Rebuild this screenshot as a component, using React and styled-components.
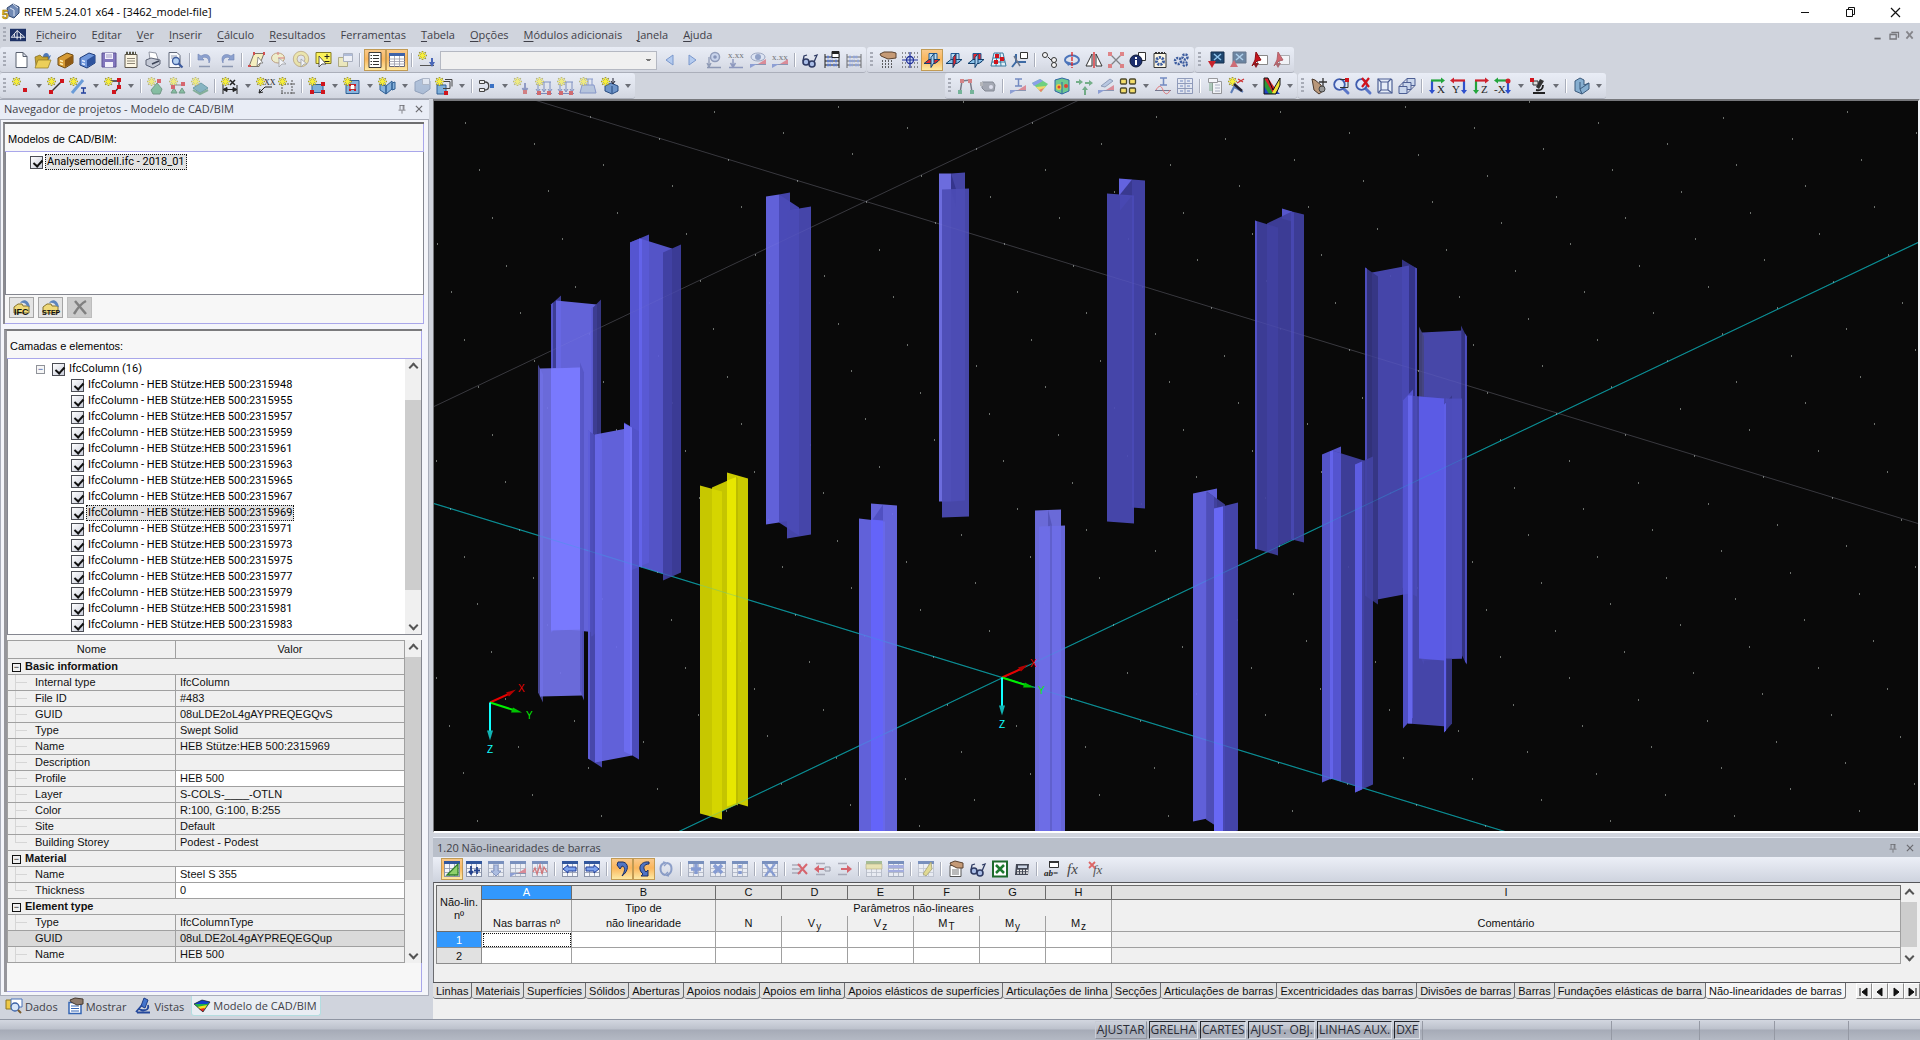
import React, { useState } from "react";
import styled, { createGlobalStyle, css } from "styled-components";

/* ---------- icons (all on an 18 x 18 grid) ---------- */

const Star = () => (
	<g>
		<path d="M4.5 0v9M0 4.5h9M1.3 1.3l6.4 6.4M7.7 1.3L1.3 7.7" stroke="#8f8a2a" strokeWidth="1.6" />
		<path d="M4.5 .8v7.4M.8 4.5h7.4M2 2l5 5M7 2L2 7" stroke="#f6ee3c" strokeWidth="1.2" />
	</g>
);

const Dot = ({ x, y, c = "#d0141c" }) => <rect x={x - 2} y={y - 2} width="4" height="4" fill={c} />;

const Magnifier = () => (
	<g>
		<path d="M11 11l5 5" stroke="#5a76c8" strokeWidth="3" strokeLinecap="round" />
		<circle cx="7.5" cy="7.5" r="5.3" fill="#dfe8fa" stroke="#3f5cae" strokeWidth="1.8" />
	</g>
);

const Cells = ({ c = "#8a93a8" }) => (
	<g>
		<rect x="1.5" y="1.5" width="15" height="15" fill="#f4f6fb" stroke={c} />
		<path d="M1 8.5h16M1 12.5h16M6.5 2v15M11.5 2v15" stroke={c} strokeWidth=".8" />
		<path d="M1 1h16v3H1z" fill="#31569c" />
	</g>
);

const Planes = ({ red }) => (
	<g>
		<path d="M6 2.5h8v9H6z" fill={red === 2 ? "#e3262c" : "#b9dcf5"} stroke="#1f5b96" />
		<path d="M1 12.5l5-4h11l-5 4z" fill={red === 0 ? "#e3262c" : "#8cc3ea"} stroke="#123f6c" />
		<path d="M8 6.5l3-4v9l-3 5z" fill={red === 1 ? "#e3262c" : "#a6d0f0"} stroke="#123f6c" />
	</g>
);

const Abacus = () => (
	<g>
		<path d="M2 3v14M16 3v14M2 6h14M2 10h14M2 14h14" stroke="#222" strokeWidth="1" />
		<path d="M4 6h2M8 6h5M4 10h6M12 10h2M4 14h4M10 14h4" stroke="#5f7cc8" strokeWidth="2.5" strokeDasharray="2 .5" />
	</g>
);

const Arrow2 = ({ a, b, t }) => (
	<g>
		<path d="M4 4v10" stroke={a} strokeWidth="2.2" />
		<path d="M1 13h6l-3 4z" fill={a} />
		<path d="M3 3.5h10" stroke={b} strokeWidth="2.2" />
		<path d="M13 .5v6l4-3z" fill={b} />
		<text x="9" y="16" fontFamily="Liberation Serif" fontSize="11" fill="#222">{t}</text>
	</g>
);

const Ramp = () => (
	<g>
		<path d="M1 13.5h16" stroke="#56648e" />
		<path d="M1 13v4l7-4z" fill="#5b76c8" />
		<path d="M9 13l8-5v5z" fill="#d95563" />
	</g>
);

const ICONS = {
	fresh: <path d="M4 1.5h7l4 4v11H4zM11 1.5v4h4" fill="#fff" stroke="#59606f" />,
	open: (
		<g>
			<path d="M9 6c0-5 6-5 6-1l2-1-2 5-4-3 2 0" fill="#4d78b8" />
			<path d="M1 6l5-2 2 2h6v9H2z" fill="#c7a632" stroke="#7d661c" strokeWidth=".7" />
			<path d="M4 9h13l-3 8H1z" fill="#eccf59" stroke="#8d7624" strokeWidth=".7" />
		</g>
	),
	boxY: (
		<g>
			<path d="M2 7l9-5 6 2v8l-8 5-7-3z" fill="#d69a34" stroke="#6b4a14" />
			<path d="M9 9v7l8-4V4z" fill="#8f5a14" />
			<path d="M4 9.5l3 1M4 12.5l3 1" stroke="#fff2b8" strokeWidth="1.5" />
		</g>
	),
	boxB: (
		<g>
			<path d="M2 7l9-5 6 2v8l-8 5-7-3z" fill="#6f97dc" stroke="#1e3c7a" />
			<path d="M9 9v7l8-4V4z" fill="#2f549e" />
			<path d="M4 9.5l3 1M4 12.5l3 1" stroke="#e2ecff" strokeWidth="1.5" />
		</g>
	),
	save: (
		<g>
			<path d="M2 2h14v14H2z" fill="#8277bd" stroke="#5c5294" />
			<path d="M5 2h8v6H5zM5 11h8v5H5z" fill="#f2f0fb" />
			<path d="M6 4h6M6 6h6" stroke="#9f9ac4" />
		</g>
	),
	report: (
		<g>
			<path d="M3 3.5h12v13H3z" fill="#fbf5e3" stroke="#5d564a" />
			<path d="M4 2h10" stroke="#554" strokeWidth="2.5" strokeDasharray="2 1" />
			<path d="M5 7.5h8M5 10h8M5 12.5h8" stroke="#8b8475" />
		</g>
	),
	print: (
		<g>
			<path d="M5 1l7 1 2 6-8 1z" fill="#fff" stroke="#7c8190" strokeWidth=".8" />
			<path d="M2 9l5-2 9 2v4l-7 4-7-3z" fill="#c4c9d6" stroke="#5c6375" />
			<path d="M8 13l7-3" stroke="#3d4457" strokeWidth="1.5" />
		</g>
	),
	preview: (
		<g>
			<path d="M3 1.5h8l3 3v12H3z" fill="#f7f9fd" stroke="#5f6778" />
			<path d="M5 5h6M5 7h4" stroke="#8f98ac" />
			<circle cx="10" cy="10" r="3.5" fill="#b4d1f3" stroke="#3d5b9e" strokeWidth="1.3" />
			<path d="M12.5 12.5l4 4" stroke="#3d5b9e" strokeWidth="2.2" />
		</g>
	),
	undo: (
		<g>
			<path d="M2 3v6h6L6 7c4-2 7 0 7 5 3-6-1-11-8-7z" fill="#8ca1cf" stroke="#6f83b3" strokeWidth=".6" />
			<path d="M3 15.5h11" stroke="#8d98b2" strokeWidth="1.5" />
		</g>
	),
	redo: (
		<g>
			<path d="M16 3v6h-6l2-2c-4-2-7 0-7 5-3-6 1-11 8-7z" fill="#8ca1cf" stroke="#6f83b3" strokeWidth=".6" />
			<path d="M4 15.5h11" stroke="#8d98b2" strokeWidth="1.5" />
		</g>
	),
	selPoly: (
		<g>
			<path d="M6 2.5h10l-5 13H1z" fill="#f5efc0" stroke="#7c7466" />
			<path d="M5 1h2v3H5zM15 1h2v3h-2zM0 14h3v2H0z" fill="#d05050" />
			<path d="M10 6l-1 9 3-3 3 0z" fill="#fff" stroke="#777" strokeWidth=".8" />
		</g>
	),
	selEll: (
		<g>
			<ellipse cx="8" cy="7" rx="6.5" ry="5" fill="#f7f2b4" stroke="#a8753c" />
			<path d="M8 7h6M8 1v3" stroke="#d33" />
			<path d="M9 7l0 9 3-3 4 0z" fill="#fff" stroke="#777" strokeWidth=".8" />
		</g>
	),
	selRing: (
		<g>
			<circle cx="9" cy="8" r="6" fill="none" stroke="#f0e482" strokeWidth="3.5" />
			<circle cx="9" cy="8" r="7.7" fill="none" stroke="#a07c3c" strokeWidth=".8" />
			<circle cx="9" cy="8" r="4" fill="none" stroke="#a07c3c" strokeWidth=".8" />
			<path d="M9 8l0 8 3-3 3 0z" fill="#fff" stroke="#777" strokeWidth=".8" />
		</g>
	),
	selAdd: (
		<g>
			<path d="M2 1.5h15v11H2z" fill="#fbf25a" stroke="#857b20" />
			<path d="M13 3v5M10.5 5.5h5M10.500 10.5h5" stroke="#222" />
			<path d="M5 5l0 11 3-3 4 0z" fill="#fff" stroke="#333" strokeWidth=".8" />
		</g>
	),
	winCopy: (
		<g>
			<path d="M2.5 6.5h9v9h-9z" fill="#f6eda0" stroke="#8f8747" />
			<path d="M7.5 2.5h9v8h-9z" fill="#f7f8fb" stroke="#8790a4" />
			<path d="M8 3h8v2H8z" fill="#8da0c8" />
		</g>
	),
	list: (
		<g>
			<path d="M3 1.5h12v15H3z" fill="#fff" stroke="#3a3a3a" />
			<path d="M7 4.5h6M7 7.5h6M7 10.5h6M7 13.5h6" stroke="#333" />
			<path d="M4.5 4.5h1.5M4.5 7.5h1.5M4.5 10.5h1.5M4.5 13.5h1.5" stroke="#333" />
		</g>
	),
	sheet: (
		<g>
			<path d="M1.5 2.5h15v13h-15z" fill="#fff" stroke="#667" />
			<path d="M1 2h16v3H1z" fill="#3f62a8" />
			<path d="M1 8h16M1 10.5h16M1 13h16M6.5 5v11M11.5 5v11" stroke="#99a" strokeWidth=".8" />
		</g>
	),
	starAxis: (
		<g>
			<Star />
			<path d="M2 14.5h14" stroke="#555" />
			<path d="M13 7v4h-2l3 5 3-5h-2V7z" fill="#4a67b8" />
		</g>
	),
	prev: <path d="M12 4v10L5 9z" fill="#b4cbef" stroke="#7b98cc" />,
	next: <path d="M6 4v10l7-5z" fill="#b4cbef" stroke="#7b98cc" />,
	eyeDown: (
		<g>
			<circle cx="10" cy="6" r="4.5" fill="#b8c8ea" stroke="#5a6c98" strokeWidth="1.5" />
			<circle cx="10" cy="6" r="1.8" fill="#4a5f96" />
			<path d="M4 6v8M2 12l2 4 2-4M2 16.5h14" stroke="#5d6d94" fill="none" strokeWidth="1.3" />
		</g>
	),
	xxDown: (
		<g>
			<text x="1" y="7" fontFamily="Liberation Serif" fontSize="9" fill="#222">x.xx</text>
			<path d="M6 8v7M3.5 12l2.5 4 2.5-4M2 16.5h14" stroke="#5d6da4" fill="none" strokeWidth="1.5" />
		</g>
	),
	eyeRamp: (
		<g>
			<ellipse cx="9" cy="6" rx="7" ry="4" fill="#dbe4f6" stroke="#6d7da4" />
			<circle cx="9" cy="6" r="3" fill="#5d75ad" />
			<Ramp />
		</g>
	),
	xxRamp: (
		<g>
			<text x="1" y="9" fontFamily="Liberation Serif" fontSize="9" fill="#222">x.xx</text>
			<Ramp />
		</g>
	),
	glasses: (
		<g>
			<circle cx="5" cy="11" r="3" fill="#a9bde6" stroke="#2e3a63" strokeWidth="1.6" />
			<circle cx="11" cy="13" r="3" fill="#a9bde6" stroke="#2e3a63" strokeWidth="1.6" />
			<path d="M2 10l1-5 3-1M13 11l3-7-3 1" fill="none" stroke="#2e3a63" strokeWidth="1.3" />
		</g>
	),
	abacus: (
		<g>
			<Abacus />
			<path d="M9 .5h7v6H9z" fill="#fff" stroke="#222" />
			<path d="M9 1h7v2H9z" fill="#222" />
		</g>
	),
	abacus2: <Abacus />,
	handGrid: (
		<g>
			<path d="M3 10h12M3 13h12M3 16h12" stroke="#333" strokeDasharray="1 2" strokeWidth="1.5" />
			<path d="M1 3l4-2h8l4 1v5l-8 1-7-3z" fill="#c59a76" stroke="#5b4331" />
		</g>
	),
	snapGrid: (
		<g>
			<path d="M1 2h16M1 6h16M1 12h16M1 16h16" stroke="#333" strokeDasharray="1 2" strokeWidth="1.2" />
			<circle cx="9" cy="9" r="3.5" fill="#cdd9f5" stroke="#22329a" strokeWidth="1.3" />
			<path d="M9 1v16M1 9h16" stroke="#22329a" strokeWidth="1.2" />
		</g>
	),
	plane0: <Planes red={0} />,
	plane1: <Planes red={1} />,
	plane2: <Planes red={2} />,
	planeGrid: (
		<g>
			<path d="M5 2h9l3 13H2z" fill="#dff0fa" stroke="#3a7a9e" />
			<path d="M4 7h11M3 11h13M8 2L7 15M11 2l1 13" stroke="#3a7a9e" />
			<Dot x={8} y={5} /><Dot x={13} y={8} /><Dot x={7} y={11} />
		</g>
	),
	planeTool: (
		<g>
			<path d="M5 3v8h10M5 11l-4 5" stroke="#3d6aa4" strokeWidth="2" fill="none" />
			<path d="M9.5 1.5h7v6h-7z" fill="#fff" stroke="#333" />
			<path d="M3 5l6 10" stroke="#6d7688" strokeWidth="1.5" />
		</g>
	),
	copyNode: (
		<g fill="#f5f5f7" stroke="#333">
			<circle cx="4" cy="4" r="2.5" />
			<path d="M7 6l5 5" />
			<circle cx="13" cy="9" r="2.5" />
			<circle cx="13" cy="14" r="2.5" />
		</g>
	),
	rotate: (
		<g>
			<ellipse cx="9" cy="9" rx="7" ry="4.5" fill="none" stroke="#4b74ba" strokeWidth="2" />
			<path d="M3 10l2 5 4-3z" fill="#4b74ba" />
			<path d="M9 1v16" stroke="#d22" strokeWidth="1.3" strokeDasharray="4 1" />
		</g>
	),
	mirror: (
		<g>
			<path d="M7 3v12H1zM11 3v12h6z" fill="#fff" stroke="#333" />
			<path d="M9 1v16" stroke="#d22" strokeWidth="1.3" />
		</g>
	),
	cross: (
		<g>
			<path d="M3 3l12 12M15 3L3 15" stroke="#444" strokeWidth="1.3" />
			<Dot x={3} y={3} c="#d44" /><Dot x={15} y={3} c="#d44" /><Dot x={3} y={15} c="#d44" /><Dot x={15} y={15} c="#d44" />
		</g>
	),
	info: (
		<g>
			<path d="M9.5 1.5h7v8h-7z" fill="#fff" stroke="#333" />
			<circle cx="7" cy="10" r="6" fill="#1d2f6e" stroke="#0d1838" />
			<path d="M7 9v5M7 6v2" stroke="#fff" strokeWidth="2" />
		</g>
	),
	gearPage: (
		<g>
			<path d="M3 2.5h12v14H3z" fill="#fbf6e4" stroke="#333" />
			<circle cx="9" cy="10" r="3.5" fill="none" stroke="#3b5b9e" strokeWidth="3" strokeDasharray="2 1" />
			<path d="M4 2h10" stroke="#333" strokeWidth="2" strokeDasharray="2 1" />
		</g>
	),
	gears: (
		<g fill="none" stroke="#3b5b9e">
			<circle cx="5" cy="10" r="3" strokeWidth="2.5" strokeDasharray="2 1" />
			<circle cx="12" cy="6" r="2.5" strokeWidth="2.5" strokeDasharray="2 1" />
			<circle cx="12" cy="13" r="2" strokeWidth="2" strokeDasharray="2 1" />
		</g>
	),
	csDown: (
		<g>
			<path d="M4 1h13v11H4z" fill="#1f4770" stroke="#17314e" />
			<path d="M7 3l7 6M14 3L7 9" stroke="#8fc3ea" strokeWidth="1.5" />
			<path d="M1 10h8l-4 7z" fill="#c7222b" />
		</g>
	),
	csUp: (
		<g>
			<path d="M4 1h13v11H4z" fill="#1f4770" stroke="#17314e" />
			<path d="M7 3l7 6M14 3L7 9" stroke="#8fc3ea" strokeWidth="1.5" />
			<path d="M1 16h8l-4-7z" fill="#c7222b" />
		</g>
	),
	pdf: (
		<g>
			<path d="M6.5 4.5h10v9h-10z" fill="#fff" stroke="#888" />
			<path d="M5 1l5 8-4 1-5 5 3-6z" fill="#c7141e" stroke="#8b0c12" />
			<path d="M2 12h6l-3 5z" fill="#8b1a20" />
		</g>
	),

	node: (<g><Star /><Dot x={13} y={13} /></g>),
	line: (<g><path d="M4 15L15 4" stroke="#333" strokeWidth="1.5" /><Star /><Dot x={4} y={15} /><Dot x={15} y={4} /></g>),
	member: (
		<g>
			<path d="M3 16L14 3" stroke="#6a9cd8" strokeWidth="3" />
			<Star />
			<path d="M12 11h5M14.5 11v5M12 16h5" stroke="#22409c" strokeWidth="1.3" />
		</g>
	),
	polyline: (
		<g>
			<path d="M5 4h10v6l-5 6" stroke="#333" fill="none" strokeWidth="1.3" />
			<Star />
			<Dot x={15} y={3} /><Dot x={15} y={10} /><Dot x={10} y={15} />
		</g>
	),
	support: (
		<g>
			<path d="M10 6l5 6-2 5H6l-2-4z" fill="#4fa974" stroke="#2f6c48" />
			<Star /><Dot x={12} y={4} />
		</g>
	),
	support2: (
		<g>
			<path d="M2 8h14" stroke="#555" />
			<path d="M5 11l3 5H2zM13 11l3 5h-6z" fill="#4fa974" stroke="#2f6c48" />
			<Star /><Dot x={14} y={7} /><Dot x={4} y={10} />
		</g>
	),
	supportSurf: (
		<g>
			<path d="M2 11l8-5 7 5-8 5z" fill="#4e97a8" stroke="#256f7c" />
			<path d="M2 13l7 4 8-4" fill="none" stroke="#4d9168" strokeWidth="2" />
			<Star />
		</g>
	),
	dim: (
		<g>
			<path d="M2 8v9M16 8v9M2 12.5h14M2 12.5l4-2v4zM16 12.5l-4-2v4z" stroke="#222" fill="#222" />
			<Star />
			<path d="M9 3l5 5M14 3L9 8" stroke="#222" strokeWidth="1.5" />
		</g>
	),
	comment: (
		<g>
			<Star />
			<text x="8" y="8" fontFamily="Liberation Serif" fontSize="8" fill="#222">XX</text>
			<path d="M16 10H9l-6 6M3 16l1-4M3 16l4-1" stroke="#222" fill="none" />
		</g>
	),
	guide: (
		<g>
			<path d="M4 4v13M14 3v14M3 7h14M3 16h14" stroke="#555" strokeDasharray="2 1" />
			<Star />
		</g>
	),
	surf: (
		<g>
			<path d="M4 7.5h11v8H4z" fill="#7fb0da" stroke="#2e5f94" />
			<Star />
			<Dot x={15} y={7} /><Dot x={4} y={15} /><Dot x={15} y={15} />
		</g>
	),
	opening: (
		<g>
			<path d="M3 3.5h13v13H3z" fill="#89b4dc" stroke="#2e5f94" />
			<path d="M7 7.5h5v5H7z" fill="#fff" stroke="#a33" />
			<Star />
			<rect x="6" y="7" width="2" height="2" fill="#d0141c" /><rect x="11" y="7" width="2" height="2" fill="#d0141c" /><rect x="6" y="12" width="2" height="2" fill="#d0141c" /><rect x="11" y="12" width="2" height="2" fill="#d0141c" />
		</g>
	),
	fold: (
		<g>
			<path d="M2 7l6 2v8l-6-4zM8 9l6-5v8l-6 5zM14 6l3-1v7l-3 1z" fill="#86b2dc" stroke="#2e5f94" />
			<Star />
		</g>
	),
	solid: (
		<g>
			<path d="M2 5l7-3 8 2v8l-7 5-8-3z" fill="#8fa9cc" stroke="#61799e" />
			<path d="M9.5 1.5h7v6h-7z" fill="#dfe6f2" stroke="#8b97ad" />
		</g>
	),
	solidNew: (
		<g>
			<path d="M2 8h9v9H2z" fill="#7fb0da" stroke="#2e5f94" />
			<path d="M8 4.5h7v7H8M10 2.5h7v7" fill="none" stroke="#444" />
			<Star /><Dot x={11} y={16} />
		</g>
	),
	joint: (
		<g>
			<path d="M1.5 3.5h5v3h-5zM1.5 11.5h5v3h-5z" fill="#eee" stroke="#444" />
			<path d="M7 5c5 0 5 8 0 8" fill="none" stroke="#444" strokeWidth="1.3" />
			<Dot x={14} y={9} c="#3b72c4" />
		</g>
	),
	load: (<g><Star /><path d="M12 6v7M9.5 11l2.500 4 2.500-4" stroke="#5160a4" fill="none" strokeWidth="1.8" /><Dot x={12} y={15} c="#c44" /></g>),
	loadLine: (
		<g>
			<path d="M2 5h14M3 5v9M9 5v9M15 5v9M1 12l2 3 2-3M7 12l2 3 2-3M13 12l2 3 2-3M1 16.5h16" stroke="#3f58a4" fill="none" />
			<Star />
			<Dot x={4} y={16} c="#c22" /><Dot x={14} y={16} c="#c22" />
		</g>
	),
	loadSurf: (
		<g>
			<path d="M3 8h12l2 8H1z" fill="#9fb4d6" stroke="#4f68b4" />
			<path d="M5 2v6M9 2v6M13 2v6M5 2h9" stroke="#4f68b4" />
			<Star />
		</g>
	),
	loadSolid: (
		<g>
			<path d="M4 9l6-3 7 3v5l-6 3-7-3z" fill="#6f95c9" stroke="#274b80" />
			<path d="M11 9v7" stroke="#274b80" />
			<Star />
			<path d="M12 1v5M10 4l2 3 2-3" stroke="#223" fill="none" />
		</g>
	),
	frame: (
		<g>
			<path d="M3 16L5 4l8-1 2 12" stroke="#334" fill="none" strokeWidth="1.5" />
			<Dot x={5} y={4} c="#c44" /><Dot x={13} y={4} c="#c44" /><Dot x={3} y={15} c="#396" /><Dot x={15} y={15} c="#396" />
		</g>
	),
	camera: (<g><path d="M3 5h11l2 3-1 6H6L3 11z" fill="#7d828e" stroke="#4d525e" /><circle cx="12" cy="10" r="2" fill="#dde" /><path d="M1 5h3v4H1z" fill="#999" /></g>),
	beamRamp: (<g><path d="M6 2h7M9.5 2v7M6 9h7" stroke="#2b4fa4" strokeWidth="1.5" /><Ramp /></g>),
	surfRes: (
		<g>
			<path d="M1 6l8-4 8 5-7 8z" fill="#6fd080" />
			<path d="M1 6l8-4 3 2-9 5z" fill="#8aa0e8" />
			<path d="M5 10l10-1-5 6z" fill="#f0d868" />
			<path d="M8 13l5-2-3 4z" fill="#e87c70" />
		</g>
	),
	solidRes: (
		<g>
			<path d="M2 3l7-2 7 2v11l-7 3-7-3z" fill="#6fc890" stroke="#2f66a4" />
			<circle cx="6" cy="10" r="3" fill="#e8cc46" /><circle cx="6" cy="10" r="1.5" fill="#dd4433" />
			<path d="M9 5v12" stroke="#2f66a4" /><circle cx="13" cy="9" r="2" fill="#dd4433" />
		</g>
	),
	reaction: (<g fill="#2d8a46"><path d="M9 18v-5H7l3-4 3 4h-2v5zM10 5h4V3l4 3-4 3V7h-4zM1 4h3V2l4 3-4 3V6H1z" /></g>),
	section: (<g><path d="M4 9l9-7 3 2-8 6z" fill="#9db4d8" stroke="#5a6f96" /><Ramp /></g>),
	panels: (
		<g fill="#f3dd6a" stroke="#4d4a2e" strokeWidth="1.3">
			<rect x="1.5" y="2" width="6" height="5" rx="1" /><rect x="10.5" y="2" width="6" height="5" rx="1" />
			<rect x="1.5" y="11" width="6" height="5" rx="1" /><rect x="10.5" y="11" width="6" height="5" rx="1" />
		</g>
	),
	beamWave: (<g><path d="M6 1h7M9.5 1v7M6 8h7" stroke="#2b4fa4" strokeWidth="1.5" /><path d="M1 13.5h16" stroke="#335" /><path d="M2 13c3-5 5-5 7 0s5 5 7 0" stroke="#d33" fill="none" /></g>),
	blocks: (<g fill="#e6eaf4" stroke="#5b6b98"><path d="M1.5 1.5h15v15h-15zM9 1v16M1 6.5h16M1 11.5h16" /><path d="M4 4h3M11 4h3M4 9h3M11 9h3M4 14h3M11 14h3" stroke="#2b4fa4" /></g>),
	reportCol: (
		<g>
			<path d="M6.5 4.5h9v12h-9z" fill="#fff" stroke="#666" />
			<path d="M2.5 1.5h9v4h-9z" fill="#fff" stroke="#666" />
			<path d="M3 7h4M3 9h4M3 11h4M3 13h4" stroke="#3b8a4b" /><path d="M9 8h5M9 11h5M9 14h5" stroke="#8890a8" />
		</g>
	),
	wand: (<g><path d="M3 16l3-6 9 5" stroke="#5c7db8" fill="none" strokeWidth="2" /><Star /><path d="M6 7l8 7" stroke="#223" strokeWidth="2.5" /><path d="M9 6l7-4M10 2l5 3" stroke="#c33" strokeWidth="1.3" /></g>),
	colors: (
		<g>
			<path d="M1 1v16h16z" fill="#2244c4" />
			<path d="M1 1l11 16H6L1 9z" fill="#2b9a36" />
			<path d="M1 1h4l9 13-4 2z" fill="#d8222a" />
			<path d="M9 16L17 1v7l-5 9z" fill="#f0e332" />
			<path d="M1 1v16h12L17 8V1L10 13 5 1z" stroke="#111" />
		</g>
	),
	pan: (<g><path d="M2 2l3 1 6 5 2 6-4 3-5-4z" fill="#b9977a" stroke="#4c3a2d" /><path d="M13 1v9M9 5h8" stroke="#333" strokeWidth="1.3" /><circle cx="12" cy="12" r="3" fill="#999" stroke="#444" /></g>),
	zoomWin: (<g><Magnifier /><path d="M8 2.5h8v8H8" fill="none" stroke="#333" /><Dot x={15} y={3} /></g>),
	zoomOff: (<g><Magnifier /><path d="M8 1l7 9M15 1L8 10" stroke="#d3131c" strokeWidth="2.2" /></g>),
	cube: (<g fill="#e6edf8" stroke="#4d5f94" strokeWidth="1.2"><path d="M2 2h13l1 1v13H3l-1-1z" /><path d="M5 5h7v8H5zM2 2l3 3M15 2l-3 3M5 13l-3 3M12 13l4 3" /></g>),
	cubes: (<g fill="#c9d6ec" stroke="#4d5f94"><path d="M9 1.5h8v7H9z" /><path d="M5 5.5h8v7H5z" /><path d="M1 9.5h8v7H1zM1 9.5l8-8M9 16.5l8-8" /></g>),
	axX: <Arrow2 a="#2e50cc" b="#23a53c" t="X" />,
	axY: (<g><path d="M14 4v10" stroke="#2e50cc" strokeWidth="2.2" /><path d="M11 13h6l-3 4z" fill="#2e50cc" /><path d="M4 3.5h11" stroke="#cf222e" strokeWidth="2.2" /><path d="M4 .5v6L0 3.5z" fill="#cf222e" /><text x="2" y="16" fontFamily="Liberation Serif" fontSize="11" fill="#222">Y</text></g>),
	axZ: <Arrow2 a="#23a53c" b="#cf222e" t="Z" />,
	axNX: (<g><path d="M14 4v10" stroke="#2e50cc" strokeWidth="2.2" /><path d="M11 13h6l-3 4z" fill="#2e50cc" /><path d="M4 3.5h9" stroke="#23a53c" strokeWidth="2.2" /><path d="M4 .5v6L0 3.5z" fill="#23a53c" /><circle cx="14" cy="4" r="2.5" fill="#cf222e" /><text x="0" y="16" fontFamily="Liberation Serif" fontSize="11" fill="#222">-X</text></g>),
	micro: (<g><path d="M11 2l4 2-5 8-3-2z" fill="#333" /><path d="M4 16h12M7 13c5 1 7-1 7-5" stroke="#222" fill="none" strokeWidth="1.8" /><path d="M4 4h5v4H4z" fill="#ddd" stroke="#333" /><Dot x={3} y={3} /></g>),
	render: (<g><path d="M3 4l5-3 4 2v5l5-2v6l-7 5-7-3z" fill="#86aed0" stroke="#3b5a7c" /><path d="M8 5v7l2 5M8 12l9-6" stroke="#3b5a7c" fill="none" /></g>),

	tblEdit: (<g><Cells /><path d="M4 15L15 4v11z" fill="#8fd16a" stroke="#2f7d2b" strokeWidth="1.3" /></g>),
	tblAdd: (<g><Cells /><path d="M6 6v7M4 11l2 3 2-3M12 7v7M9 10.5h6" stroke="#24438e" strokeWidth="1.8" fill="none" /></g>),
	tblDown: (<g><Cells /><path d="M7 5h4v6h3l-5 5-5-5h3z" fill="#8fa8dd" stroke="#4d67a8" /></g>),
	tblRamp: (<g><Cells /><Ramp /></g>),
	tblWave: (<g><Cells /><path d="M2 12l2-4 2 6 3-9 2 9 2-7 3 5" stroke="#c33" fill="none" strokeWidth="1.3" /></g>),
	tblLeft: (<g><Cells /><path d="M2 9l5-4v2h8v4H7v2z" fill="#7da2ec" stroke="#22409c" /></g>),
	tblRight: (<g><Cells /><path d="M16 9l-5-4v2H3v4h8v2z" fill="#7da2ec" stroke="#22409c" /></g>),
	hookL: (<g><path d="M5 2h5c6 1 6 9-1 14 3-5 4-9 0-10l-2 3-3-4z" fill="#4f74c4" stroke="#1c2f63" /></g>),
	hookR: (<g><path d="M14 2c-9-1-12 7-6 12l-2 2h7v-6l-2 2c-4-4-2-8 3-8z" fill="#4f74c4" stroke="#1c2f63" /></g>),
	sync: (<g fill="none" stroke="#5571b0" strokeWidth="2"><path d="M8 3c-6 1-6 10 0 12M10 3c6 1 6 10 0 12" /><path d="M6 2l4 1-3 3M12 16l-4-1 3-3" strokeWidth="1.3" /></g>),
	rowPlus: (<g><Cells /><path d="M9 4v10M4 9h10" stroke="#4d6fc4" strokeWidth="3.5" /></g>),
	rowStar: (<g><Cells /><path d="M5 5l8 8M13 5l-8 8" stroke="#4d6fc4" strokeWidth="3.5" /></g>),
	rowDots: (<g><Cells /><path d="M9 5v3M9 11v3" stroke="#4d6fc4" strokeWidth="3.5" /></g>),
	rowX: (<g><Cells /><path d="M4 4l10 12M14 4L4 16" stroke="#4d6fc4" strokeWidth="2" /></g>),
	delRow: (<g><path d="M1 5h9M1 9h9M1 13h9" stroke="#889" strokeWidth="1.5" /><path d="M7 4l9 10M16 4L7 14" stroke="#d3131c" strokeWidth="2" /></g>),
	delL: (<g><path d="M3 3.5h9M3 14.5h9" stroke="#889" strokeWidth="1.5" /><path d="M1 9l5-4v3h5v2H6v3z" fill="#d3131c" /><path d="M12 7h5v4h-5z" fill="none" stroke="#667" /></g>),
	delR: (<g><path d="M3 3.5h9M3 14.5h9" stroke="#889" strokeWidth="1.5" /><path d="M17 9l-5-4v3H6v2h6v3z" fill="#d3131c" /></g>),
	rowsY: (<g><Cells c="#a5abb8" /><path d="M1 1h16v3H1z" fill="#7ba05c" /><path d="M1 4h16v5H1z" fill="#ece28c" stroke="#968c3c" strokeWidth=".6" /></g>),
	rowsB: (<g><Cells /><path d="M1 5h16v3H1zM1 10h16v2H1z" fill="#7f8cd8" /></g>),
	pen: (<g><Cells c="#b0b6c4" /><path d="M14 2l1 7-6 7-3-2z" fill="#e6d85c" stroke="#7c7326" strokeWidth=".8" /></g>),
	propHand: (<g><path d="M3 5.5h11v11H3z" fill="#fff" stroke="#555" /><path d="M5 10h7M5 12h7M5 14h7" stroke="#777" /><path d="M3 3l5-2 8 2v5l-6 0-6-3z" fill="#c59a76" stroke="#5b4331" /></g>),
	excel: (<g><path d="M2 1.5h14v15H2z" fill="#fff" stroke="#1e6b2c" strokeWidth="2" /><path d="M5 5l8 8M13 5l-8 8" stroke="#1e7b2f" strokeWidth="2.5" /></g>),
	calc: (<g><path d="M3 4h13l-1 11H2z" fill="#424754" /><path d="M5 5.5h9v2.500H5z" fill="#cdd6e6" /><path d="M4 10.5h11M4 13h11" stroke="#eee" strokeDasharray="2 1" strokeWidth="1.5" /></g>),
	ab: (<g><path d="M6.5 1.5h9v6h-9z" fill="#fff" stroke="#333" /><path d="M6 1h10v2H6z" fill="#333" /><text x="1" y="16" fontFamily="Liberation Serif" fontStyle="italic" fontWeight="bold" fontSize="9" fill="#222">ab=</text></g>),
	fx: <text x="2" y="14" fontFamily="Liberation Serif" fontStyle="italic" fontSize="15" fill="#444">fx</text>,
	fxDel: (<g><text x="6" y="14" fontFamily="Liberation Serif" fontStyle="italic" fontSize="13" fill="#555">fx</text><path d="M2 2l6 6M8 2L2 8" stroke="#d66" strokeWidth="1.8" /></g>),

	logo5: (<g><path d="M5 5l6-4 6 3v6l-5 5-5-2z" fill="#7089b4" stroke="#334a73" /><path d="M8 5l4 2v6M11 1l5 4" stroke="#dbe5f5" fill="none" /><text x="0" y="16" fontFamily="Liberation Sans" fontWeight="bold" fontSize="12" fill="#e8bd20" stroke="#7a5c06" strokeWidth=".5">5</text></g>),
	bridge: (<g><path d="M0 2h18v14H0z" fill="#1e3266" /><path d="M1 11.5h16M8 4v10M8 4L2 11M8 4l8 7M5 8v3M12 8v6" stroke="#fff" fill="none" /></g>),
	navData: (<g><path d="M1 3h8v9H1z" fill="#edc948" stroke="#8d7420" /><path d="M6 2h11v8H6z" fill="#fff" stroke="#4870b8" /><circle cx="10" cy="10" r="4" fill="#d7e6f9" stroke="#3b62a8" strokeWidth="1.3" /><path d="M13 13l3 3" stroke="#7c5b2b" strokeWidth="2" /></g>),
	navShow: (<g><path d="M3 5.5h12v11H3z" fill="#fff" stroke="#3465b4" strokeWidth="1.5" /><path d="M5 9h8M5 11.5h8M5 14h8" stroke="#3465b4" /><path d="M4 3l5-2 8 1v5l-6 1-6-3z" fill="#8d7a6c" stroke="#453a31" /></g>),
	navView: (<g><path d="M10 1l4 2-3 8-4-2z" fill="#4474cc" stroke="#1e3c86" /><path d="M3 15.5h13M5 12l2 1c6 1 8-1 7-5M2 15l6-7" stroke="#24489c" fill="none" strokeWidth="1.8" /></g>),
	navCad: (<g><path d="M1 7l8-4 8 2-7 10z" fill="#1fb04a" /><path d="M1 7l8-4 8 2-3 2-9 0z" fill="#123ecc" /><path d="M4 10l10-2-2 4-5 0z" fill="#f2e41f" /><path d="M6 12l6-1-2 4z" fill="#e22" /><path d="M1 7l8-4 8 2-7 10z" fill="none" stroke="#223" strokeWidth=".7" /></g>),
	ifc: (<g><path d="M1 8l4-3h4l1 2h6v7H1z" fill="#efd97a" stroke="#85732c" /><path d="M7 4c3-5 9-3 10 4l-3-1c-1-3-4-4-7-3z" fill="#5d85bd" /><text x="1" y="16" fontFamily="Liberation Sans" fontWeight="bold" fontSize="9" fill="#111">IFC</text></g>),
	step: (<g><path d="M1 8l4-3h4l1 2h6v7H1z" fill="#efd97a" stroke="#85732c" /><path d="M7 4c3-5 9-3 10 4l-3-1c-1-3-4-4-7-3z" fill="#5d85bd" /><text x="0" y="16" fontFamily="Liberation Sans" fontWeight="bold" fontSize="7" fill="#111">STEP</text></g>),
	remove: <path d="M4 2l11 13M15 2C9 5 6 10 3 15" stroke="#808080" strokeWidth="2.5" fill="none" />,
	pin: <path d="M6.5 4v6M11.5 4v6M6 4.5h6M4.5 10.5h9M9 11v4M10.5 4v6" stroke="#6b6b70" fill="none" />,
	close: <path d="M5 5l8 8M13 5l-8 8" stroke="#6b6b70" strokeWidth="1.5" />,
	winMin: <path d="M5 9.5h8" stroke="#111" />,
	winMax: <path d="M5.5 6.5h6v7h-6zM7.5 6V4.5h6v7H12" stroke="#111" fill="none" />,
	winClose: <path d="M5 5l9 9M14 5L5 14" stroke="#111" strokeWidth="1.2" />,
	docMin: <path d="M5 13h7" stroke="#6b6b70" strokeWidth="2" />,
	docMax: <path d="M4.5 8.5h7v5h-7zM6 6h8v6M4 8h8" stroke="#77777c" strokeWidth="1.5" fill="none" />,
	docClose: <path d="M5 5l7 8M12 5l-7 8" stroke="#85858a" strokeWidth="2" />,
};

const Icon = ({ name, size = 18 }) => (
	<svg width={size} height={size} viewBox="0 0 18 18" fill="none" overflow="visible" aria-hidden="true">{ICONS[name]}</svg>
);

/* ---------- tool bar contents: "|" is a divider, "~" faded, "*" pressed, "v" drop arrow ---------- */

const BAR_FILE = "fresh open boxY boxB save report print preview | undo redo | selPoly ~selEll ~selRing selAdd ~winCopy | *list *sheet | starAxis".split(" ");
const BAR_FILE_2 = "prev next ~eyeDown ~xxDown ~eyeRamp ~xxRamp | glasses abacus ~abacus2".split(" ");
const BAR_PLANE = "handGrid snapGrid *plane0 plane1 plane2 planeGrid planeTool | copyNode rotate mirror ~cross info gearPage gears".split(" ");
const BAR_CS = "csDown ~csUp pdf ~pdf".split(" ");
const BAR_INSERT = "node v line member v polyline v | ~support ~support2 ~supportSurf | dim v comment guide | surf v opening v fold v ~solid solidNew v | joint v ~load ~loadLine ~loadLine ~loadSurf loadSolid v".split(" ");
const BAR_RESULT = "~frame ~camera | ~beamRamp surfRes solidRes ~reaction ~section panels v ~beamWave ~blocks | ~reportCol wand v colors v".split(" ");
const BAR_VIEW = "pan zoomWin zoomOff cube cubes | axX axY axZ axNX v micro v | render v".split(" ");
const BAR_TABLE = "*tblEdit tblAdd ~tblDown ~tblRamp ~tblWave | tblLeft tblRight | *hookL *hookR ~sync | ~rowPlus ~rowStar ~rowDots | ~rowX | ~delRow ~delL ~delR | ~rowsY ~rowsB | ~pen | propHand glasses excel calc | ab fx fxDel".split(" ");

const MENU = ["_Ficheiro", "E_ditar", "_Ver", "_Inserir", "_Cálculo", "_Resultados", "Ferrame_ntas", "_Tabela", "_Opções", "_Módulos adicionais", "_Janela", "_Ajuda"];

const COLUMN_IDS = [2315948, 2315955, 2315957, 2315959, 2315961, 2315963, 2315965, 2315967, 2315969, 2315971, 2315973, 2315975, 2315977, 2315979, 2315981, 2315983];

const PROPS = [
	{ group: "Basic information" },
	{ name: "Internal type", value: "IfcColumn" },
	{ name: "File ID", value: "#483" },
	{ name: "GUID", value: "08uLDE2oL4gAYPREQEGQvS" },
	{ name: "Type", value: "Swept Solid" },
	{ name: "Name", value: "HEB Stütze:HEB 500:2315969" },
	{ name: "Description", value: "" },
	{ name: "Profile", value: "HEB 500", edit: true },
	{ name: "Layer", value: "S-COLS-____-OTLN" },
	{ name: "Color", value: "R:100, G:100, B:255" },
	{ name: "Site", value: "Default" },
	{ name: "Building Storey", value: "Podest - Podest", last: true },
	{ group: "Material" },
	{ name: "Name", value: "Steel S 355", edit: true },
	{ name: "Thickness", value: "0", edit: true, last: true },
	{ group: "Element type" },
	{ name: "Type", value: "IfcColumnType" },
	{ name: "GUID", value: "08uLDE2oL4gAYPREQEGQup", hot: true },
	{ name: "Name", value: "HEB 500" },
];

const SHEETS = ["Linhas", "Materiais", "Superfícies", "Sólidos", "Aberturas", "Apoios nodais", "Apoios em linha", "Apoios elásticos de superfícies", "Articulações de linha", "Secções", "Articulações de barras", "Excentricidades das barras", "Divisões de barras", "Barras", "Fundações elásticas de barra", "Não-linearidades de barras"];

/* ---------- 3D scene ---------- */

const COLUMN_HEIGHT = 328;

// every face: x1, y1, x2, y2 of its top edge, fill, optional height
const FACES = [
	// back row
	[939, 174, 951, 174, "#7474ee"], [951, 174, 965, 173, "#4a4ab2"], [951, 174, 956, 190, "#34348a", 17], [942, 190, 969, 189, "#4c4cb5"],
	[1119, 179, 1132, 180, "#6b6bf0", 17], [1132, 180, 1145, 181, "#4646ae"], [1120, 195, 1132, 180, "#36368a", 16], [1107, 194, 1134, 196, "#4a4ab6"],
	[766, 197, 779, 195, "#6868ea"], [779, 195, 790, 193, "#4949b5"], [779, 195, 799, 208, "#4a4ab8"], [787, 211, 811, 207, "#4a4ab6"],
	[1282, 209, 1292, 212, "#5c5cdc", 10], [1292, 212, 1304, 215, "#4141a0"], [1267, 224, 1292, 212, "#4141a0"], [1255, 221, 1278, 228, "#4141a0"], [1291, 212, 1294, 213, "#4848b2"], [1255, 221, 1257, 222, "#5454cc"],
	[630, 243, 649, 235, "#5050c6"], [640, 239, 672, 249, "#5a5ad6"], [630, 243, 640, 239, "#5656d2"], [639, 239, 642, 240, "#6464ec"], [663, 253, 681, 245, "#4040a0"],
	[1402, 260, 1417, 269, "#36368a"], [1372, 273, 1409, 266, "#4a4ab6"], [1365, 268, 1378, 277, "#353582"], [1365, 268, 1367, 269, "#5050c4"], [1415, 268, 1417, 269, "#4e4ebc"], [1409, 265, 1415, 268, "#35358a"],
	[551, 305, 561, 296, "#42429f"], [556, 301, 597, 305, "#6a6aea"], [551, 305, 553, 303, "#5656cc"], [592, 309, 601, 300, "#3a3a8c"], [591, 309, 593, 308, "#5c5cd4"],
	[1422, 333, 1462, 331, "#4c4cb5"], [1419, 327, 1424, 337, "#454580"], [1461, 326, 1466, 336, "#38388c"], [1465, 334, 1467, 337, "#5252c8"],
	// middle pairs at both sides
	[1408, 396, 1447, 399, "#4a4ab6"], [1403, 401, 1413, 390, "#5555d4"], [1444, 405, 1452, 396, "#38388a"],
	[1419, 397, 1444, 399, "#5c5ce8", 262], [1446, 399, 1462, 399, "#4e4ebd", 260], [1408, 396, 1412, 396, "#6868ee"], [1444, 405, 1446, 403, "#6262ee"],
	[538, 365, 543, 375, "#4a4a9c"], [540, 369, 582, 368, "#7272ea"], [551, 369, 581, 368, "#7a7aff", 262], [580, 363, 584, 373, "#5656c4"],
	// front row
	[588, 431, 602, 440, "#4c4cb8"], [595, 435, 632, 428, "#6868ea"], [624, 423, 639, 432, "#5252c8"], [630, 427, 632, 428, "#7474f8"], [624, 424, 630, 427, "#6e6ef2"], [588, 431, 590, 432, "#6060dc"],
	[1322, 455, 1341, 447, "#5a5ad8"], [1332, 451, 1364, 461, "#4242a2"], [1332, 451, 1341, 454, "#5656d2"], [1330, 452, 1333, 451, "#6464ec"], [1355, 465, 1373, 457, "#4343a4"], [1355, 465, 1362, 462, "#6060e6"],
	[871, 504, 897, 506, "#6a6aea"], [872, 521, 883, 505, "#4f4fbe", 17], [859, 519, 885, 522, "#6868ea"], [871, 520, 883, 521, "#6464fa"],
	[1035, 511, 1061, 510, "#7272e8"], [1048, 510, 1052, 526, "#5555b8", 17], [1039, 527, 1065, 526, "#6e6ee6"], [1050, 526, 1052, 526, "#5f5fca"],
	[1193, 494, 1217, 489, "#6767e9"], [1207, 492, 1225, 505, "#3e3e98"], [1206, 492, 1214, 497, "#5050ba"], [1214, 509, 1238, 503, "#4949b6"], [1214, 509, 1223, 507, "#6a6afa"],
	// selected one
	[727, 473, 748, 479, "#d9d900"], [712, 488, 737, 477, "#d4d400"], [727, 481, 738, 477, "#e8e800", 326], [700, 486, 722, 492, "#d6d600"], [736, 477, 738, 478, "#b8b800"],
];

const GRID_DOTS = [];
for (let i = -20; i < 34; i++) {
	for (let j = -30; j < 24; j++) {
		const x = 1002.3 + i * 69.02 + j * 55.35;
		const y = 678.3 + i * 21.17 - j * 26.45;
		if (x > 434 && x < 1918 && y > 101 && y < 832) GRID_DOTS.push([Math.round(x), Math.round(y)]);
	}
}

const Face = ({ face: [x1, y1, x2, y2, fill, h = COLUMN_HEIGHT] }) => (
	<polygon points={`${x1},${y1} ${x2},${y2} ${x2},${y2 + h} ${x1},${y1 + h}`} fill={fill} fillOpacity=".93" />
);

const Axes = ({ x, y }) => (
	<g transform={`translate(${x} ${y})`} fontFamily="Liberation Sans" fontSize="10">
		<path d="M0 0L20 -9" stroke="#e80000" strokeWidth="2" />
		<path d="M16 -10l10-3-7 7z" fill="#b40000" />
		<path d="M0 0L25 8" stroke="#00f000" strokeWidth="2" />
		<path d="M23 5l9 5-11 0z" fill="#00c400" />
		<path d="M0 0V30" stroke="#1ff" strokeWidth="2" />
		<path d="M-3 28h6l-3 10z" fill="#12b4b4" />
		<text x="28" y="-11" fill="#e00">X</text>
		<text x="36" y="16" fill="#0e0">Y</text>
		<text x="-3" y="50" fill="#1ff">Z</text>
	</g>
);

const Scene = () => (
	<SceneSvg viewBox="434 101 1484 731" preserveAspectRatio="xMidYMid slice" role="img" aria-label="Modelo 3D">
		<rect x="0" y="0" width="2400" height="1600" fill="#090909" />
		<g stroke="#2f2f2f" strokeWidth="1">
			<path d="M536 101L1918 524M434 407L1078 101" />
		</g>
		<g stroke="#067f7c" strokeWidth="1.2">
			<path d="M434 504L1505 832M679 832L1918 243" />
		</g>
		{GRID_DOTS.map(([x, y]) => <rect key={`${x}-${y}`} x={x} y={y} width="1" height="1" fill="#cfd8cf" />)}
		{FACES.map((face, i) => <Face key={i} face={face} />)}
		<path d="M434 504L1505 832M679 832L1918 243" stroke="#20b0d8" strokeOpacity=".28" />
		<path d="M536 101L1918 524M434 407L1078 101" stroke="#8888c8" strokeOpacity=".1" />
		<Axes x={490} y={703} />
		<Axes x={1002} y={678} />
	</SceneSvg>
);

/* ---------- parts ---------- */

const Tools = ({ items }) => items.map((item, i) => {
	if (item === "|") return <Divider key={i} />;
	if (item === "v") return <DropButton key={i} aria-label="Mais opções" />;
	const name = item.replace(/^[~*]/, "");
	return (
		<ToolButton key={i} $on={item[0] === "*"} $faded={item[0] === "~"} aria-label={name}>
			<Icon name={name} />
		</ToolButton>
	);
});

const Scrollbar = ({ before = 0, thumb }) => (
	<ScrollTrack>
		<ScrollArrow $up aria-label="Subir" />
		{before > 0 && <ScrollRest $grow={before} />}
		<ScrollThumb $grow={thumb} />
		<ScrollRest $grow={100 - before - thumb} />
		<ScrollArrow aria-label="Descer" />
	</ScrollTrack>
);

const Navigator = () => {
	const [selected, setSelected] = useState(2315969);

	return (
		<NavPanel>
			<NavHeader>
				<span>Navegador de projetos - Modelo de CAD/BIM</span>
				<HeaderButtons>
					<PlainButton aria-label="Fixar"><Icon name="pin" size={14} /></PlainButton>
					<PlainButton aria-label="Fechar"><Icon name="close" size={14} /></PlainButton>
				</HeaderButtons>
			</NavHeader>
			<NavBody>
				<ModelFrame>
					<SectionLabel>Modelos de CAD/BIM:</SectionLabel>
					<ModelList>
						<TreeRow $indent={24}>
							<Check type="checkbox" defaultChecked id="model" />
							<TreeText htmlFor="model" $selected>Analysemodell.ifc - 2018_01</TreeText>
						</TreeRow>
					</ModelList>
					<ModelButtons>
						<FileButton aria-label="Importar IFC"><Icon name="ifc" /></FileButton>
						<FileButton aria-label="Importar STEP"><Icon name="step" /></FileButton>
						<FileButton disabled aria-label="Remover"><Icon name="remove" /></FileButton>
					</ModelButtons>
				</ModelFrame>
				<LayerFrame>
					<SectionLabel>Camadas e elementos:</SectionLabel>
					<LayerList>
						<TreeRows>
							<TreeRow $indent={28}>
								<Expander aria-label="Recolher">−</Expander>
								<Check type="checkbox" defaultChecked id="all" />
								<TreeText htmlFor="all">IfcColumn (16)</TreeText>
							</TreeRow>
							{COLUMN_IDS.map((id) => (
								<TreeRow key={id} $indent={63} onClick={() => setSelected(id)}>
									<Check type="checkbox" defaultChecked id={`c${id}`} />
									<TreeText htmlFor={`c${id}`} $selected={id === selected}>IfcColumn - HEB Stütze:HEB 500:{id}</TreeText>
								</TreeRow>
							))}
						</TreeRows>
						<Scrollbar before={10} thumb={79} />
					</LayerList>
					<PropArea>
						<PropTable>
							<colgroup><col style={{ width: 168 }} /><col /></colgroup>
							<thead>
								<tr><th>Nome</th><th>Valor</th></tr>
							</thead>
							<tbody>
								{PROPS.map((p, i) => p.group ? (
									<tr key={i}>
										<GroupCell colSpan="2"><Minus>−</Minus>{p.group}</GroupCell>
									</tr>
								) : (
									<PropRow key={i} $hot={p.hot}>
										<NameCell $last={p.last} $hot={p.hot}>{p.name}</NameCell>
										<ValueCell $edit={p.edit}>{p.value}</ValueCell>
									</PropRow>
								))}
							</tbody>
						</PropTable>
						<Scrollbar thumb={77} />
					</PropArea>
					<PanelFoot />
				</LayerFrame>
			</NavBody>
			<NavTabs>
				<NavTab><Icon name="navData" />Dados</NavTab>
				<NavTab><Icon name="navShow" />Mostrar</NavTab>
				<NavTab><Icon name="navView" />Vistas</NavTab>
				<NavTab $on><Icon name="navCad" />Modelo de CAD/BIM</NavTab>
			</NavTabs>
		</NavPanel>
	);
};

const TablePanel = () => (
	<TableSection>
		<TableHeader>
			<span>1.20 Não-linearidades de barras</span>
			<HeaderButtons>
				<PlainButton aria-label="Fixar"><Icon name="pin" size={14} /></PlainButton>
				<PlainButton aria-label="Fechar"><Icon name="close" size={14} /></PlainButton>
			</HeaderButtons>
		</TableHeader>
		<TableTools><Tools items={BAR_TABLE} /></TableTools>
		<GridArea>
			<GridTable>
				<colgroup>
					{[45, 90, 144, 66, 66, 66, 66, 66, 66].map((w, i) => <col key={i} style={{ width: w }} />)}
					<col />
				</colgroup>
				<thead>
					<tr>
						<CornerCell rowSpan="3">Não-lin.<br />nº</CornerCell>
						{"ABCDEFGHI".split("").map((c) => <LetterCell key={c} $on={c === "A"}>{c}</LetterCell>)}
					</tr>
					<tr>
						<HeadCell></HeadCell>
						<HeadCell>Tipo de</HeadCell>
						<HeadCell colSpan="6">Parâmetros não-lineares</HeadCell>
						<HeadCell></HeadCell>
					</tr>
					<tr>
						<HeadCell>Nas barras nº</HeadCell>
						<HeadCell>não linearidade</HeadCell>
						<HeadCell>N</HeadCell>
						<HeadCell>V<Sub>y</Sub></HeadCell>
						<HeadCell>V<Sub>z</Sub></HeadCell>
						<HeadCell>M<Sub>T</Sub></HeadCell>
						<HeadCell>M<Sub>y</Sub></HeadCell>
						<HeadCell>M<Sub>z</Sub></HeadCell>
						<HeadCell>Comentário</HeadCell>
					</tr>
				</thead>
				<tbody>
					{[1, 2].map((n) => (
						<tr key={n}>
							<NumberCell $on={n === 1}>{n}</NumberCell>
							{[0, 1, 2, 3, 4, 5, 6, 7].map((c) => <DataCell key={c} $focus={n === 1 && c === 0} />)}
							<DataCell $grey />
						</tr>
					))}
				</tbody>
			</GridTable>
			<Scrollbar thumb={98} />
		</GridArea>
		<SheetBar>
			<SheetTabs>
				{SHEETS.map((s, i) => <SheetTab key={s} $on={i === SHEETS.length - 1}>{s}</SheetTab>)}
			</SheetTabs>
			<SheetNav>
				{["M3 3v8M10 3v8L5 7z", "M9 3v8L4 7z", "M5 3v8l5-4z", "M4 3v8l5-4zM11 3v8"].map((d) => (
					<NavArrow key={d} aria-label="Mover separadores">
						<svg width="14" height="14" viewBox="0 0 14 14"><path d={d} fill="#111" stroke="#111" /></svg>
					</NavArrow>
				))}
			</SheetNav>
		</SheetBar>
	</TableSection>
);

export default function App() {
	return (
		<Window>
			<GlobalStyle />
			<TitleBar>
				<Icon name="logo5" />
				<TitleText>RFEM 5.24.01 x64 - [3462_model-file]</TitleText>
				<WindowButton aria-label="Minimizar"><Icon name="winMin" /></WindowButton>
				<WindowButton aria-label="Restaurar"><Icon name="winMax" /></WindowButton>
				<WindowButton aria-label="Fechar"><Icon name="winClose" /></WindowButton>
			</TitleBar>
			<MenuBar>
				<Grip />
				<Icon name="bridge" size={16} />
				<MenuItems>
					{MENU.map((m) => {
						const [before, after] = m.split("_");
						return <MenuItem key={m}>{before}<u>{after[0]}</u>{after.slice(1)}</MenuItem>;
					})}
				</MenuItems>
				<PlainButton aria-label="Minimizar janela"><Icon name="docMin" size={16} /></PlainButton>
				<PlainButton aria-label="Restaurar janela"><Icon name="docMax" size={16} /></PlainButton>
				<PlainButton aria-label="Fechar janela"><Icon name="docClose" size={16} /></PlainButton>
			</MenuBar>
			<ToolRow>
				<ToolGroup>
					<Grip />
					<Tools items={BAR_FILE} />
					<LoadCase aria-label="Caso de carga"><option> </option></LoadCase>
					<Tools items={BAR_FILE_2} />
				</ToolGroup>
				<ToolGroup><Grip /><Tools items={BAR_PLANE} /></ToolGroup>
				<ToolGroup><Grip /><Tools items={BAR_CS} /></ToolGroup>
			</ToolRow>
			<ToolRow>
				<ToolGroup><Grip /><Tools items={BAR_INSERT} /></ToolGroup>
				<ToolGap />
				<ToolGroup><Grip /><Tools items={BAR_RESULT} /></ToolGroup>
				<ToolGroup><Grip /><Tools items={BAR_VIEW} /></ToolGroup>
			</ToolRow>
			<Workspace>
				<Navigator />
				<MainColumn>
					<Viewport><Scene /></Viewport>
					<TablePanel />
				</MainColumn>
			</Workspace>
			<StatusBar>
				<StatusButtons>
					<StatusButton $raised>AJUSTAR</StatusButton>
					<StatusButton>GRELHA</StatusButton>
					<StatusButton>CARTES</StatusButton>
					<StatusButton>AJUST. OBJ.</StatusButton>
					<StatusButton>LINHAS AUX.</StatusButton>
					<StatusButton>DXF</StatusButton>
				</StatusButtons>
				<StatusCell $w={189} />
				<StatusCell $w={88} />
				<StatusCell $w={75} />
				<StatusCell $w={74} />
				<StatusCell $w={72} />
			</StatusBar>
		</Window>
	);
}

const GlobalStyle = createGlobalStyle`
  * {
    box-sizing: border-box;
  }
  body {
    margin: 0;
    background: #d0d4dd;
  }
  button, input, select {
    font: inherit;
    color: inherit;
    margin: 0;
  }
`;

const Window = styled.div`
  display: flex;
  flex-direction: column;
  height: 100vh;
  min-height: 840px;
  overflow: hidden;
  background: #d0d4dd;
  font-family: "Open Sans", sans-serif;
  font-size: 11px;
  color: #3f3f48;
`;

const TitleBar = styled.header`
  display: flex;
  align-items: center;
  height: 23px;
  padding: 0 3px 0 2px;
  background: #fff;
`;

const TitleText = styled.span`
  flex: 1;
  margin-left: 4px;
  font-size: 11px;
  color: #000;
`;

const PlainButton = styled.button`
  display: flex;
  padding: 0;
  border: 0;
  background: none;
`;

const WindowButton = styled(PlainButton)`
  justify-content: center;
  width: 45px;
`;

const MenuBar = styled.nav`
  display: flex;
  align-items: center;
  height: 24px;
  padding-right: 2px;
`;

const MenuItems = styled.div`
  display: flex;
  flex: 1;
  gap: 15px;
  margin-left: 10px;
`;

const MenuItem = styled.button`
  padding: 0;
  border: 0;
  background: none;
  line-height: 14px;
  white-space: nowrap;
  u {
    text-underline-offset: 2px;
  }
`;

const ToolRow = styled.div`
  display: flex;
  flex: none;
  height: 26px;
`;

const ToolGroup = styled.div`
  display: flex;
  align-items: center;
  height: 26px;
  margin-right: 1px;
  padding-top: 1px;
  padding-right: 1px;
  border-bottom: 1px solid #abafba;
  border-radius: 3px;
  background: linear-gradient(#e9edf6, #dde1eb 60%, #d2d6e0);
`;

const ToolGap = styled.div`
  width: 309px;
`;

const Grip = styled.i`
  width: 3px;
  height: 16px;
  margin: 0 4px 0 3px;
  background: repeating-linear-gradient(#a7abb6 0 2px, transparent 2px 4px);
`;

const ToolButton = styled.button`
  display: flex;
  align-items: center;
  justify-content: center;
  flex: none;
  width: 22px;
  height: 22px;
  padding: 0;
  border: 0;
  background: none;
  svg {
    opacity: ${(p) => (p.$faded ? 0.6 : 1)};
  }
  ${(p) => p.$on && css`
    border: 1px solid #c29b54;
    background: linear-gradient(#f9c98b, #fbb65c 45%, #fde9a4);
  `}
`;

const DropButton = styled.button`
  display: flex;
  justify-content: center;
  align-items: center;
  width: 13px;
  height: 22px;
  padding: 0;
  border: 0;
  background: none;
  &::before {
    content: "";
    border: 3px solid transparent;
    border-top: 4px solid #6b6e76;
    border-bottom: 0;
  }
`;

const Divider = styled.i`
  flex: none;
  width: 2px;
  height: 14px;
  margin: 0 3px;
  border-left: 1px solid #a9aebb;
  background: #fff;
`;

const LoadCase = styled.select`
  width: 217px;
  height: 19px;
  margin: 0 2px;
  border: 1px solid #b4b8c2;
  border-radius: 0;
  background-color: #f0f0f0;
  appearance: none;
  background-image: linear-gradient(45deg, transparent 50%, #777 50%), linear-gradient(-45deg, transparent 50%, #777 50%);
  background-position: right 7px center, right 4px center;
  background-size: 3px 3px;
  background-repeat: no-repeat;
`;

const Workspace = styled.div`
  display: flex;
  flex: 1;
  min-height: 0;
  gap: 4px;
`;

const NavPanel = styled.aside`
  display: flex;
  flex-direction: column;
  flex: none;
  width: 429px;
  border-top: 1px solid #a3a8b5;
`;

const NavHeader = styled.div`
  display: flex;
  align-items: center;
  justify-content: space-between;
  height: 19px;
  padding: 0 3px 2px 4px;
  background: #e9edf6;
`;

const HeaderButtons = styled.div`
  display: flex;
  gap: 3px;
`;

const NavBody = styled.div`
  display: flex;
  flex: 1;
  flex-direction: column;
  min-height: 0;
  padding: 2px 4px 3px 2px;
  border: 1px solid #a9adb9;
  background: #f4f5fa;
`;

const ModelFrame = styled.section`
  display: flex;
  flex: 1;
  flex-direction: column;
  min-height: 120px;
  border-top: 2px solid #6e6e70;
  border-left: 2px solid #8b8b90;
  background: #f7f7f7;
`;

const SectionLabel = styled.h2`
  height: 28px;
  margin: 0;
  padding: 8px 3px 0;
  border-right: 1px solid #a9a7ea;
  border-bottom: 1px solid #a9a7ea;
  background: #f7f7f7;
  font: 11px/15px "Liberation Sans", sans-serif;
  color: #000;
`;

const ModelList = styled.div`
  flex: 1;
  padding-top: 2px;
  border: 1px solid #84868f;
  border-top: 0;
  background: #fff;
`;

const TreeRow = styled.div`
  display: flex;
  align-items: center;
  height: 16px;
  padding-left: ${(p) => p.$indent}px;
`;

const Check = styled.input`
  flex: none;
  width: 13px;
  height: 13px;
  border: 1px solid #4b4d54;
  background: linear-gradient(135deg, #fff, #c9cdda);
  appearance: none;
  &:checked::after {
    content: "";
    display: block;
    width: 4px;
    height: 7px;
    margin: 1px 0 0 4px;
    border: solid #111;
    border-width: 0 2px 2px 0;
    transform: rotate(42deg);
  }
`;

const TreeText = styled.label`
  margin-left: 2px;
  padding: 0 1px;
  border: 1px dotted ${(p) => (p.$selected ? "#111" : "transparent")};
  background: ${(p) => (p.$selected ? "#e2e2e2" : "none")};
  font: 11px/14px Roboto, sans-serif;
  color: #000;
  white-space: nowrap;
`;

const Expander = styled.button`
  width: 9px;
  height: 9px;
  margin-right: 7px;
  padding: 0;
  border: 1px solid #8f9299;
  background: #f6f6f6;
  font: 9px/7px "Liberation Sans", sans-serif;
  color: #2d46a0;
`;

const ModelButtons = styled.div`
  display: flex;
  gap: 4px;
  height: 29px;
  padding: 2px 4px;
  border-right: 1px solid #a9a7ea;
  border-bottom: 1px solid #a9a7ea;
`;

const FileButton = styled.button`
  display: flex;
  align-items: center;
  justify-content: center;
  width: 25px;
  height: 21px;
  padding: 0;
  border: 1px solid #a5a5a5;
  background: #e4e4e4;
  &:disabled {
    background: #cbcbcb;
    border-color: #bdbdbd;
  }
`;

const LayerFrame = styled.section`
  display: flex;
  flex: none;
  flex-direction: column;
  margin-top: 5px;
  margin-right: 2px;
  margin-left: 1px;
  border-top: 2px solid #7b7b7d;
  border-left: 3px solid #96969b;
  background: #f7f7f7;
`;

const LayerList = styled.div`
  display: flex;
  height: 276px;
  border: 1px solid #84868f;
  border-top: 0;
  background: #fff;
`;

const TreeRows = styled.div`
  flex: 1;
  padding-top: 2px;
  overflow: hidden;
`;

const ScrollTrack = styled.div`
  display: flex;
  flex: none;
  flex-direction: column;
  width: 16px;
  background: #f0f0f0;
`;

const ScrollArrow = styled.button`
  display: flex;
  align-items: center;
  justify-content: center;
  height: 17px;
  padding: 0;
  border: 0;
  background: none;
  &::before {
    content: "";
    width: 5px;
    height: 5px;
    border: solid #555;
    border-width: 2px 0 0 2px;
    transform: rotate(${(p) => (p.$up ? 45 : 225)}deg);
  }
`;

const ScrollThumb = styled.div`
  flex: ${(p) => p.$grow};
  background: #cdcdcd;
`;

const ScrollRest = styled.div`
  flex: ${(p) => p.$grow};
`;

const PropArea = styled.div`
  display: flex;
  align-items: stretch;
  margin-top: 5px;
  border-right: 1px solid #84868f;
`;

const PropTable = styled.table`
  flex: 1;
  border-collapse: collapse;
  table-layout: fixed;
  background: #f0f0f0;
  font: 11px/15px "Liberation Sans", sans-serif;
  color: #111;
  th, td {
    height: 16px;
    padding: 0 4px;
    border: 1px solid #a0a0a0;
    text-align: left;
    white-space: nowrap;
  }
  th {
    height: 18px;
    font-weight: normal;
    text-align: center;
  }
`;

const GroupCell = styled.td`
  font-weight: bold;
`;

const Minus = styled.span`
  display: inline-block;
  width: 9px;
  height: 9px;
  margin-right: 4px;
  border: 1px solid #111;
  font: 9px/7px "Liberation Sans", sans-serif;
  text-align: center;
`;

const PropRow = styled.tr`
  background: ${(p) => (p.$hot ? "#dadada" : "none")};
`;

const NameCell = styled.td`
  && {
    padding-left: 27px;
    background: ${(p) => (p.$hot ? "none" : "linear-gradient(#d6d6d6, #d6d6d6) 8px 7px / 11px 1px no-repeat, linear-gradient(#d6d6d6, #d6d6d6) 7px 0 / 1px " + (p.$last ? "8px" : "100%") + " no-repeat")};
  }
`;

const ValueCell = styled.td`
  background: ${(p) => (p.$edit ? "#fff" : "none")};
`;

const PanelFoot = styled.div`
  height: 29px;
  border-right: 1px solid #a9a7ea;
  border-bottom: 1px solid #a9a7ea;
`;

const NavTabs = styled.div`
  display: flex;
  height: 23px;
  padding: 0 4px;
  gap: 4px;
`;

const NavTab = styled.button`
  display: flex;
  align-items: center;
  gap: 2px;
  height: 20px;
  padding: 0 3px 0 1px;
  border: ${(p) => (p.$on ? "1px solid #b4dde0" : "0")};
  border-top: 0;
  border-radius: 0 0 3px 3px;
  background: ${(p) => (p.$on ? "#e9edf3" : "none")};
  white-space: nowrap;
`;

const MainColumn = styled.main`
  display: flex;
  flex: 1;
  flex-direction: column;
  min-width: 0;
`;

const Viewport = styled.div`
  display: flex;
  flex: 1;
  min-height: 0;
  border: 2px solid #77787c;
  border-right-color: #f0f2f6;
  border-bottom-color: #fff;
  border-left-width: 1px;
`;

const SceneSvg = styled.svg`
  display: block;
  width: 100%;
  height: 100%;
`;

const TableSection = styled.section`
  display: flex;
  flex: none;
  flex-direction: column;
  margin-top: 4px;
  padding-bottom: 20px;
  border-top: 1px solid #e9edf6;
  background: #f0f0f0;
`;

const TableHeader = styled.div`
  display: flex;
  align-items: center;
  justify-content: space-between;
  height: 19px;
  padding: 0 3px 0 4px;
  background: #b9bfca;
`;

const TableTools = styled.div`
  display: flex;
  align-items: center;
  height: 25px;
  padding: 0 8px 1px;
  background: linear-gradient(#eceff7, #ced3de);
`;

const GridArea = styled.div`
  display: flex;
  align-items: flex-start;
  height: 100px;
  padding: 2px 3px 0 2px;
  border-top: 1px solid #55565a;
  border-left: 1px solid #6b6c70;
  ${ScrollTrack} {
    align-self: flex-start;
    height: 80px;
  }
`;

const GridTable = styled.table`
  flex: 1;
  border-collapse: collapse;
  table-layout: fixed;
  font: 11px/14px "Liberation Sans", sans-serif;
  color: #111;
  th, td {
    padding: 0;
    font-weight: normal;
    text-align: center;
    white-space: nowrap;
  }
`;

const LetterCell = styled.th`
  height: 14px;
  border: 1px solid #6b6b6b;
  background: ${(p) => (p.$on ? "#3298fd" : "#e1e1e1")};
  color: ${(p) => (p.$on ? "#fff" : "#111")};
  line-height: 13px;
`;

const CornerCell = styled.th`
  border: 1px solid #6b6b6b;
  background: #e1e1e1;
  line-height: 13px;
`;

const HeadCell = styled.th`
  height: 16px;
  border-right: 1px solid #a0a0a0;
  border-left: 1px solid #a0a0a0;
  background: #f0f0f0;
`;

const Sub = styled.sub`
  margin-left: 1px;
  font-size: 10px;
  line-height: 0;
`;

const NumberCell = styled.td`
  height: 16px;
  border: 1px solid #8b8b8b;
  background: ${(p) => (p.$on ? "#3298fd" : "#e1e1e1")};
  color: ${(p) => (p.$on ? "#fff" : "#111")};
`;

const DataCell = styled.td`
  height: 16px;
  border: 1px solid #a0a0a0;
  background: ${(p) => (p.$grey ? "#f0f0f0" : "#fff")};
  outline: ${(p) => (p.$focus ? "1px dotted #111" : "none")};
  outline-offset: -2px;
`;

const SheetBar = styled.div`
  display: flex;
  justify-content: space-between;
  height: 17px;
  border-top: 1px solid #55565a;
`;

const SheetTabs = styled.div`
  display: flex;
  min-width: 0;
  overflow: hidden;
`;

const SheetTab = styled.button`
  flex: none;
  height: 16px;
  padding: 0 3px;
  border: 1px solid #6b6c70;
  border-top: 0;
  border-left: 0;
  border-radius: 0 0 3px 3px;
  background: ${(p) => (p.$on ? "#f6f6f6" : "#e1e1e1")};
  font: 11px/14px "Liberation Sans", sans-serif;
  color: #111;
  white-space: nowrap;
`;

const SheetNav = styled.div`
  display: flex;
`;

const NavArrow = styled.button`
  display: flex;
  width: 16px;
  padding: 1px 0 0;
  border: 1px solid #8b8b8b;
  border-top-color: #fff;
  border-left-color: #fff;
  background: #f0f0f0;
`;

const StatusBar = styled.footer`
  display: flex;
  flex: none;
  justify-content: flex-end;
  height: 21px;
  border-top: 1px solid #8f95a2;
  background: linear-gradient(#d3d7e0, #bcc1cc 45%, #a6abb7 50%, #b4b9c4);
`;

const StatusButtons = styled.div`
  display: flex;
  align-items: center;
  gap: 2px;
  padding-right: 2px;
`;

const StatusButton = styled.button`
  height: 18px;
  padding: 0 1px;
  border: 1px solid;
  border-color: ${(p) => (p.$raised ? "#c8ccd6 #8f939d #8f939d #c8ccd6" : "#22252c #dde1e8 #dde1e8 #22252c")};
  background: none;
  font-size: 12px;
  line-height: 14px;
  color: #2a2c36;
  white-space: nowrap;
`;

const StatusCell = styled.div`
  width: ${(p) => p.$w}px;
  margin-top: 1px;
  border-left: 1px solid #9599a4;
`;
